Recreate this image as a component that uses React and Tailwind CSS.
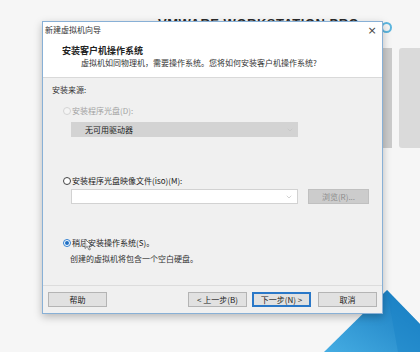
import { ChevronDown } from "lucide-react";

const Radio = ({ checked, disabled }) => (
  <span
    className={`w-[8px] h-[8px] rounded-full border flex items-center justify-center shrink-0 ${
      disabled ? "border-[#d4d4d4] bg-[#f4f4f4]" : checked ? "border-[#2f7fd0] bg-white" : "border-[#444] bg-white"
    }`}
  >
    {checked && <span className="w-[4px] h-[4px] rounded-full bg-[#1f6fc4]" />}
  </span>
);

const Button = ({ children, primary, className = "" }) => (
  <button
    className={`h-[15px] w-[59px] text-[8px] leading-none text-[#222] bg-[#e1e1e1] border ${
      primary ? "border-[#2a78c8] outline outline-1 outline-[#2a78c8] -outline-offset-2" : "border-[#b4b4b4]"
    } ${className}`}
  >
    {children}
  </button>
);

export default function App() {
  return (
    <div
      className="relative w-[420px] h-[352px] overflow-hidden bg-[#f6f6f6]"
      style={{ fontFamily: '"Noto Sans CJK SC", "Noto Sans", sans-serif' }}
    >
      {/* backdrop: the window behind the wizard */}
      <div className="absolute left-[158px] top-[17px] text-[13px] font-bold leading-none tracking-[0.5px] text-[#2a2a2a] font-['Liberation_Sans',sans-serif]">
        VMWARE WORKSTATION PRO
      </div>
      <div className="absolute left-[381px] top-[22px] w-[11px] h-[11px] rounded-full border-2 border-[#5cb6df]" />
      <div className="absolute left-[382px] top-[48px] w-[10px] h-[100px] bg-[#cbcbcb]" />
      <div className="absolute left-[399px] top-[48px] w-[30px] h-[100px] rounded-[3px] bg-[#dadada]" />
      <svg className="absolute left-0 top-0" width="420" height="352">
        <defs>
          <linearGradient id="tri" x1="0" y1="1" x2="1" y2="0">
            <stop offset="0" stopColor="#45ade3" />
            <stop offset="1" stopColor="#1678bd" />
          </linearGradient>
        </defs>
        <polygon points="387,290 420,324 420,352 324,352" fill="url(#tri)" />
        <polygon points="387,290 420,324 420,352 398,352" fill="#1a84c8" opacity="0.5" />
      </svg>

      {/* wizard dialog */}
      <div className="absolute left-[42px] top-[21px] w-[341px] h-[293px] flex flex-col bg-[#f0f0f0] border border-[#88b0d6] shadow-[0_3px_8px_rgba(0,0,0,0.25)] text-[#222]">
        {/* title bar */}
        <div className="h-[16px] flex items-center justify-between bg-white pl-[2px]">
          <span className="text-[8px] leading-none text-[#333]">新建虚拟机向导</span>
          <span className="w-[20px] text-center text-[11px] leading-none text-[#444] font-['DejaVu_Sans',sans-serif]">×</span>
        </div>

        {/* header */}
        <div className="h-[40px] bg-white border-b border-[#d9d9d9] flex flex-col">
          <p className="mt-[7px] ml-[19px] text-[9px] leading-[11px] font-bold">安装客户机操作系统</p>
          <p className="mt-[1px] ml-[38px] text-[8px] leading-[11px] text-[#333]">
            虚拟机如同物理机，需要操作系统。您将如何安装客户机操作系统?
          </p>
        </div>

        {/* body */}
        <div className="h-[207px] flex flex-col pl-[9px] text-[8px] leading-[11px]">
          <p className="mt-[6px] h-[11px] text-[#333]">安装来源:</p>

          <div className="mt-[10px] h-[11px] ml-[11px] flex items-center gap-[1px] text-[#a2a2a2]">
            <Radio disabled />
            <span>安装程序光盘(D):</span>
          </div>
          <div className="mt-[6px] ml-[19px] w-[227px] h-[15px] bg-[#d3d3d3] flex items-center justify-between pl-[14px] pr-[4px]">
            <span className="text-[#222]">无可用驱动器</span>
            <ChevronDown size={8} strokeWidth={1.5} className="text-[#bdbdbd]" />
          </div>

          <div className="mt-[38px] h-[11px] ml-[11px] flex items-center gap-[1px]">
            <Radio />
            <span>安装程序光盘映像文件(iso)(M):</span>
          </div>
          <div className="mt-[3px] ml-[19px] flex items-center gap-[10px]">
            <div className="w-[227px] h-[15px] bg-white border border-[#d2d2d2] flex items-center justify-end pr-[4px]">
              <ChevronDown size={8} strokeWidth={1.5} className="text-[#a8a8a8]" />
            </div>
            <div className="w-[61px] h-[15px] bg-[#cccccc] border border-[#c0c0c0] flex items-center justify-center text-[#8d8d8d]">
              浏览(R)...
            </div>
          </div>

          <div className="relative mt-[33px] h-[11px] ml-[11px] flex items-center gap-[1px]">
            <Radio checked />
            <span>稍后安装操作系统(S)。</span>
            {/* mouse pointer */}
            <svg className="absolute left-[21px] top-[1px]" width="9" height="13" viewBox="0 0 9 13">
              <path d="M1 1 L1 10.5 L3.3 8.4 L5 12 L6.4 11.4 L4.8 7.9 L8 7.9 Z" fill="#fff" fillOpacity="0.7" stroke="#555" strokeWidth="0.7" strokeLinejoin="round" />
            </svg>
          </div>
          <p className="mt-[5px] ml-[18px] h-[11px] text-[#333]">创建的虚拟机将包含一个空白硬盘。</p>
        </div>

        {/* footer */}
        <div className="flex-1 border-t border-[#dcdcdc] flex items-start pt-[6px] px-[5px]">
          <Button>帮助</Button>
          <div className="flex-1" />
          <Button>&lt; 上一步(B)</Button>
          <Button primary className="ml-[5px]">下一步(N) &gt;</Button>
          <Button className="ml-[7px]">取消</Button>
        </div>
      </div>
    </div>
  );
}
